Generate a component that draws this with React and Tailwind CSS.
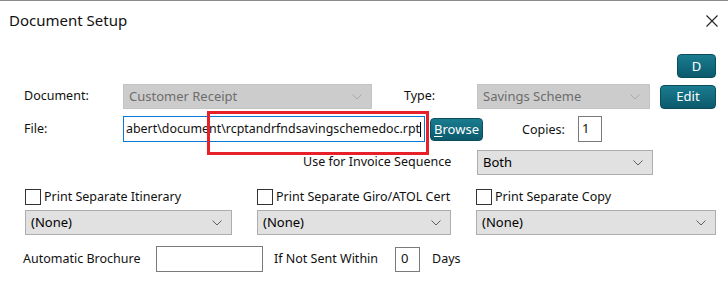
import React from 'react';

const Chevron = ({ color = '#6b6b6b' }) => (
  <svg width="10" height="6" viewBox="0 0 10 6" className="shrink-0">
    <polyline points="0.5,0.5 5,5 9.5,0.5" fill="none" stroke={color} strokeWidth="1" />
  </svg>
);

const Select = ({ value, className = '', disabled = false }) => (
  <div
    className={`flex items-center justify-between h-[25px] px-[5px] pr-[9px] border ${
      disabled ? 'bg-[#cccccc] border-[#c4c4c4] text-[#6d6d6d]' : 'bg-[#e1e1e1] border-[#adadad] text-black'
    } ${className}`}
  >
    <span className="text-[13px] leading-none">{value}</span>
    <Chevron color={disabled ? '#a8a8a8' : '#606060'} />
  </div>
);

const TealButton = ({ children, className = '' }) => (
  <button
    className={`flex items-center justify-center rounded-[4px] border border-[#0a4e5d] bg-gradient-to-b from-[#1a7c90] to-[#0b5a6c] text-white text-[13px] leading-none ${className}`}
  >
    {children}
  </button>
);

const Checkbox = ({ label, className = '' }) => (
  <div className={`flex items-center ${className}`}>
    <div className="w-[16px] h-[16px] border border-[#333333] bg-white" />
    <span className="ml-[3px] text-[12.5px] leading-none">{label}</span>
  </div>
);

export default function App() {
  return (
    <div
      className="relative w-[728px] h-[289px] bg-white border-t border-[#8a8a8a] text-[#111] overflow-hidden"
      style={{ fontFamily: '"Noto Sans", "Open Sans", sans-serif' }}
    >
      {/* Title bar */}
      <div className="flex items-center justify-between h-[39px] pl-[9px] pr-[10px]">
        <span className="text-[15px]">Document Setup</span>
        <svg width="12" height="12" viewBox="0 0 12 12">
          <path d="M0.5 0.5 L11.5 11.5 M11.5 0.5 L0.5 11.5" stroke="#222" strokeWidth="1.1" />
        </svg>
      </div>

      {/* D button */}
      <div className="flex justify-end pr-[12px] mt-[14px]">
        <TealButton className="w-[39px] h-[24px]">D</TealButton>
      </div>

      {/* Document / Type */}
      <div className="flex items-center mt-[6px] h-[25px] text-[12.5px]">
        <span className="ml-[24px] w-[99px]">Document:</span>
        <Select value="Customer Receipt" disabled className="w-[249px]" />
        <span className="ml-[32px] w-[73px]">Type:</span>
        <Select value="Savings Scheme" disabled className="w-[173px]" />
        <TealButton className="ml-[10px] w-[56px] h-[24px]">Edit</TealButton>
      </div>

      {/* File */}
      <div className="flex items-center mt-[7px] h-[26px] text-[12.5px]">
        <span className="ml-[24px] w-[99px]">File:</span>
        <div className="w-[302px] h-[26px] border border-[#0a78d7] bg-white flex items-center justify-end overflow-hidden pr-[3px]">
          <span className="whitespace-nowrap text-[12.4px] leading-none">
            abert\document\rcptandrfndsavingschemedoc.rpt
          </span>
          <span className="w-[1px] h-[15px] bg-black shrink-0" />
        </div>
        <TealButton className="ml-[5px] w-[53px] h-[23px]">
          <span className="underline underline-offset-2">B</span>rowse
        </TealButton>
        <span className="ml-[39px] w-[56px] pt-[3px]">Copies:</span>
        <div className="w-[24px] h-[26px] border border-[#7a7a7a] bg-white pl-[3px] flex items-center text-[13px]">
          1
        </div>
      </div>

      {/* Invoice sequence */}
      <div className="flex items-center mt-[8px] h-[25px] text-[12.5px]">
        <span className="ml-[303px] w-[174px]">Use for Invoice Sequence</span>
        <Select value="Both" className="w-[176px]" />
      </div>

      {/* Checkboxes */}
      <div className="flex items-center mt-[14px] h-[16px]">
        <Checkbox label="Print Separate Itinerary" className="ml-[25px] w-[232px]" />
        <Checkbox label="Print Separate Giro/ATOL Cert" className="w-[219px]" />
        <Checkbox label="Print Separate Copy" />
      </div>

      {/* Selects */}
      <div className="flex items-center mt-[5px] h-[25px]">
        <Select value="(None)" className="ml-[25px] w-[207px]" />
        <Select value="(None)" className="ml-[25px] w-[194px]" />
        <Select value="(None)" className="ml-[25px] w-[240px]" />
      </div>

      {/* Automatic brochure */}
      <div className="flex items-center mt-[10px] h-[28px] text-[12.5px]">
        <span className="ml-[23px] w-[133px]">Automatic Brochure</span>
        <div className="w-[107px] h-[26px] border border-[#7a7a7a] bg-white" />
        <span className="ml-[11px] w-[121px]">If Not Sent Within</span>
        <div className="w-[25px] h-[25px] border border-[#7a7a7a] bg-white pl-[5px] text-[13px] leading-[20px]">
          0
        </div>
        <span className="ml-[12px]">Days</span>
      </div>

      {/* Red highlight annotation */}
      <div className="absolute left-[207px] top-[110px] w-[222px] h-[44px] border-[3px] border-[#e8202a] pointer-events-none" />
    </div>
  );
}
